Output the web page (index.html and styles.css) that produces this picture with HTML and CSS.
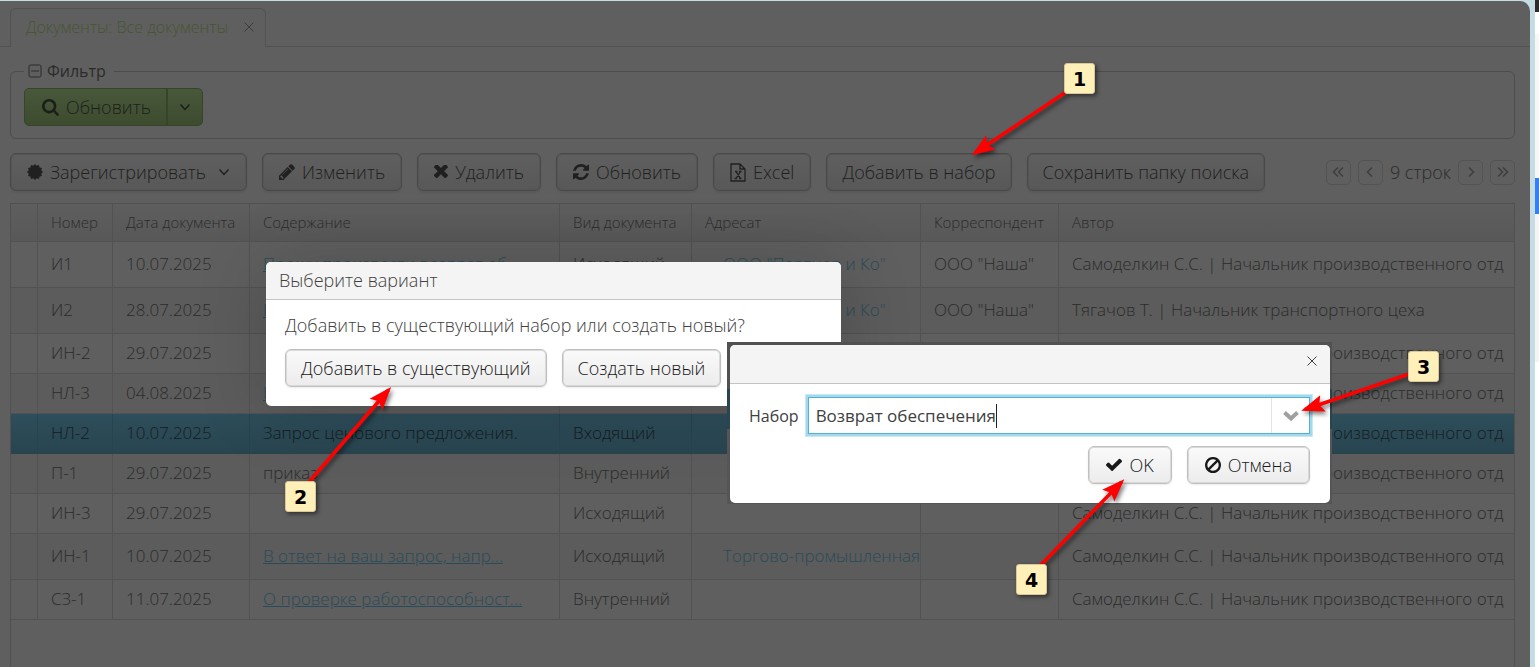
FILE: index.html
```html
<!DOCTYPE html>
<html lang="ru">
<head>
<meta charset="utf-8">
<title>Документы: Все документы</title>
<link rel="stylesheet" href="styles.css">
</head>
<body>
<svg class="defs" width="0" height="0" aria-hidden="true">
  <symbol id="i-chev" viewBox="0 0 12 12"><path d="M1.500 3.500 6 8.500l4.500-5" fill="none" stroke="currentColor" stroke-width="1.500"/></symbol>
  <symbol id="i-close" viewBox="0 0 12 12"><path d="M1.500 1.500l9 9m0-9l-9 9" fill="none" stroke="currentColor"/></symbol>
  <symbol id="i-refresh" viewBox="128 128 1536 1536"><path fill="currentColor" d="M1639 1056q0 5-1 7-64 268-268 434.500t-478 166.500q-146 0-282.500-55t-243.500-157l-129 129q-19 19-45 19t-45-19-19-45v-448q0-26 19-45t45-19h448q26 0 45 19t19 45-19 45l-137 137q71 66 161 102t187 36q134 0 250-65t186-179q11-17 53-117 8-23 30-23h192q13 0 22.500 9.500t9.500 22.500zm25-800v448q0 26-19 45t-45 19h-448q-26 0-45-19t-19-45 19-45l138-138q-148-137-349-137-134 0-250 65t-186 179q-11 17-53 117-8 23-30 23h-199q-13 0-22.500-9.500t-9.500-22.500v-7q65-268 270-434.500t480-166.500q146 0 284 55.500t245 156.500l130-129q19-19 45-19t45 19 19 45z"/></symbol>
</svg>
<div class="shell">
  <main class="window">
    <nav class="tabs">
      <div class="tab"><a href="#docs">Документы: Все документы</a><button class="tab-close" aria-label="Закрыть вкладку"><svg class="s12"><use href="#i-close"/></svg></button></div>
    </nav>
    <div class="content" id="docs">
      <fieldset class="filter">
        <legend><svg class="s14" viewBox="0 0 14 14"><rect x="1" y="1" width="12" height="12" rx="1.500" fill="none" stroke="currentColor"/><path d="M3 7h8" stroke="currentColor"/></svg>Фильтр</legend>
        <div class="split">
          <button class="split-main"><svg class="s17" viewBox="64 128 1664 1664"><path fill="currentColor" d="M1216 832q0-185-131.500-316.500t-316.500-131.500-316.500 131.500-131.500 316.500 131.500 316.500 316.500 131.500 316.500-131.500 131.500-316.500zm512 832q0 52-38 90t-90 38q-54 0-90-38l-343-342q-179 124-399 124-143 0-273.500-55.500t-225-150-150-225-55.500-273.500 55.500-273.500 150-225 225-150 273.500-55.500 273.500 55.500 225 150 150 225 55.500 273.500q0 220-124 399l343 343q37 37 37 90z"/></svg>Обновить</button>
          <button class="split-more" aria-label="Ещё"><svg class="s12"><use href="#i-chev"/></svg></button>
        </div>
      </fieldset>
      <div class="toolbar">
        <button class="btn dim icon"><svg class="s16" viewBox="-8 -8 16 16"><path fill="currentColor" d="M0-8 1.700-6.200 4-6.930 4.560-4.560 6.930-4 6.200-1.700 8 0 6.200 1.700 6.930 4 4.560 4.560 4 6.930 1.700 6.200 0 8-1.700 6.200-4 6.930-4.560 4.560-6.930 4-6.200 1.700-8 0-6.200-1.700-6.930-4-4.560-4.560-4-6.930-1.700-6.200z"/></svg>Зарегистрировать<svg class="s12 menu"><use href="#i-chev"/></svg></button>
        <button class="btn dim icon"><svg class="s16" viewBox="128 128 1536 1536"><path fill="currentColor" d="M491 1536l91-91-235-235-91 91v107h128v128h107zm523-928q0-22-22-22-10 0-17 7l-542 542q-7 7-7 17 0 22 22 22 10 0 17-7l542-542q7-7 7-17zm-54-192l416 416-832 832h-416v-416zm683 96q0 53-37 90l-166 166-416-416 166-165q36-38 90-38 53 0 91 38l235 234q37 39 37 91z"/></svg>Изменить</button>
        <button class="btn dim icon"><svg class="s14" viewBox="300 430 1200 1200"><path fill="currentColor" d="M1490 1322q0 40-28 68l-136 136q-28 28-68 28t-68-28l-294-294-294 294q-28 28-68 28t-68-28l-136-136q-28-28-28-68t28-68l294-294-294-294q-28-28-28-68t28-68l136-136q28-28 68-28t68 28l294 294 294-294q28-28 68-28t68 28l136 136q28 28 28 68t-28 68l-294 294 294 294q28 28 28 68z"/></svg>Удалить</button>
        <button class="btn dim icon"><svg class="s16"><use href="#i-refresh"/></svg>Обновить</button>
        <button class="btn dim icon"><svg class="excel" viewBox="0 0 16 19"><path d="M1 1h9l5 5v12H1zM10 1v5h5M5 8.500h2.500M9 8.500h2.500M4.500 15.500H7M9 15.500h2.500M6 8.500l4.500 7M10.500 8.500 6 15.500" fill="none" stroke="currentColor" stroke-width="1.300"/></svg>Excel</button>
        <button class="btn dim">Добавить в набор</button>
        <button class="btn dim">Сохранить папку поиска</button>
        <div class="pager">
          <button aria-label="Первая страница"><svg class="s12" viewBox="0 0 12 12"><path d="M6 1.500 1.500 6 6 10.500M11 1.500 6.500 6l4.500 4.500"/></svg></button>
          <button aria-label="Предыдущая"><svg class="s12" viewBox="0 0 12 12"><path d="M8 1.500 3.500 6 8 10.500"/></svg></button>
          <span>9 строк</span>
          <button aria-label="Следующая"><svg class="s12" viewBox="0 0 12 12"><path d="M4 1.500 8.500 6 4 10.500"/></svg></button>
          <button aria-label="Последняя страница"><svg class="s12" viewBox="0 0 12 12"><path d="M1 1.500 5.500 6 1 10.500M6 1.500 10.500 6 6 10.500"/></svg></button>
        </div>
      </div>
      <div class="grid">
        <table>
          <colgroup><col class="c-mark"><col class="c-num"><col class="c-date"><col class="c-text"><col class="c-kind"><col class="c-to"><col class="c-corr"><col></colgroup>
          <thead><tr><th></th><th>Номер</th><th>Дата документа</th><th>Содержание</th><th>Вид документа</th><th>Адресат</th><th>Корреспондент</th><th>Автор</th></tr></thead>
          <tbody>
            <tr class="tall"><td></td><td>И1</td><td>10.07.2025</td><td><a href="#i1">Прошу произвести возврат об...</a></td><td>Исходящий</td><td><a class="org" href="#o1">ООО "Партнер и Ко"</a></td><td>ООО "Наша"</td><td>Самоделкин С.С. | Начальник производственного отд</td></tr>
            <tr class="tall"><td></td><td>И2</td><td>28.07.2025</td><td><a href="#i2">Прошу произвести возврат об...</a></td><td>Исходящий</td><td><a class="org" href="#o1">ООО "Партнер и Ко"</a></td><td>ООО "Наша"</td><td>Тягачов Т. | Начальник транспортного цеха</td></tr>
            <tr><td></td><td>ИН-2</td><td>29.07.2025</td><td></td><td>Исходящий</td><td></td><td></td><td>Самоделкин С.С. | Начальник производственного отд</td></tr>
            <tr><td></td><td>НЛ-3</td><td>04.08.2025</td><td><a href="#n3">Прошу</a></td><td></td><td></td><td></td><td>Самоделкин С.С. | Начальник производственного отд</td></tr>
            <tr class="sel"><td></td><td>НЛ-2</td><td>10.07.2025</td><td>Запрос ценового предложения.</td><td>Входящий</td><td></td><td></td><td>Самоделкин С.С. | Начальник производственного отд</td></tr>
            <tr><td></td><td>П-1</td><td>29.07.2025</td><td>приказ</td><td>Внутренний</td><td></td><td></td><td>Самоделкин С.С. | Начальник производственного отд</td></tr>
            <tr><td></td><td>ИН-3</td><td>29.07.2025</td><td></td><td>Исходящий</td><td></td><td></td><td>Самоделкин С.С. | Начальник производственного отд</td></tr>
            <tr class="tall"><td></td><td>ИН-1</td><td>10.07.2025</td><td><a href="#in1">В ответ на ваш запрос, напр...</a></td><td>Исходящий</td><td><a class="org" href="#o2">Торгово-промышленная</a></td><td></td><td>Самоделкин С.С. | Начальник производственного отд</td></tr>
            <tr><td></td><td>СЗ-1</td><td>11.07.2025</td><td><a href="#sz1">О проверке работоспособност...</a></td><td>Внутренний</td><td></td><td></td><td>Самоделкин С.С. | Начальник производственного отд</td></tr>
          </tbody>
        </table>
      </div>
    </div>
  </main>
  <div class="rail"></div>
</div>

<section class="dialog choice" role="dialog" aria-labelledby="choice-title">
  <header id="choice-title">Выберите вариант</header>
  <div class="choice-body">
    <p>Добавить в существующий набор или создать новый?</p>
    <div class="row"><button class="btn">Добавить в существующий</button><button class="btn">Создать новый</button></div>
  </div>
</section>

<div class="backdrop">
  <section class="dialog pick" role="dialog" aria-label="Выбор набора">
    <header><button class="close" aria-label="Закрыть"><svg class="s12"><use href="#i-close"/></svg></button></header>
    <div class="pick-body">
      <div class="field">
        <label for="set">Набор</label>
        <div class="combo"><input id="set" type="text" value="Возврат обеспечения"><span class="caret"></span><button aria-label="Открыть список"><svg class="drop" viewBox="0 0 18 12"><path d="M2.500 2.500 9 8.500l6.500-6" fill="none" stroke="currentColor" stroke-width="4"/></svg></button></div>
      </div>
      <div class="row end">
        <button class="btn icon"><svg class="s16" viewBox="121 160 1550 1550"><path fill="currentColor" d="M1671 566q0 40-28 68l-724 724-136 136q-28 28-68 28t-68-28l-136-136-362-362q-28-28-28-68t28-68l136-136q28-28 68-28t68 28l294 295 656-657q28-28 68-28t68 28l136 136q28 28 28 68z"/></svg>OK</button>
        <button class="btn icon"><svg class="s16" viewBox="128 125 1536 1536"><path fill="currentColor" d="M1440 893q0-161-87-295l-754 753q137 89 297 89 111 0 211.500-43.500t173.500-116.500 116-174.500 43-212.500zm-999 299l755-754q-135-91-300-91-148 0-273 73t-198 199-73 274q0 162 89 299zm1223-299q0 157-61 300t-163.500 246-245 164-298.500 61-298.500-61-245-164-163.500-246-61-300 61-299.500 163.500-245.500 245-164 298.500-61 298.500 61 245 164 163.500 245.500 61 299.500z"/></svg>Отмена</button>
      </div>
    </div>
  </section>
</div>

<svg class="arrows" width="1539" height="667" viewBox="0 0 1539 667" aria-hidden="true">
  <defs><marker id="head" markerUnits="userSpaceOnUse" markerWidth="24" markerHeight="18" refX="19" refY="9" orient="auto" overflow="visible"><path d="M23 9 0 .5 4 9 0 17.500z" fill="#f00"/></marker></defs>
  <path marker-end="url(#head)" d="M1066 92 975 153"/>
  <path marker-end="url(#head)" d="M309 482 388.500 390"/>
  <path marker-end="url(#head)" d="M1409 374 1305 409.500"/>
  <path marker-end="url(#head)" d="M1035 571 1121.500 482"/>
</svg>
<span class="pin p1">1</span><span class="pin p2">2</span><span class="pin p3">3</span><span class="pin p4">4</span>
</body>
</html>
```
FILE: styles.css
```css
* { box-sizing: border-box; }
body {
  margin: 0;
  height: 100vh;
  overflow: hidden;
  background: #c5dde2;
  color: #2b2b2b;
  font: 300 18px/24px "Open Sans", "Noto Sans", sans-serif;
}
button, input { font: inherit; color: inherit; margin: 0; padding: 0; border: 0; background: none; }
svg { flex: none; display: block; }
.defs { position: absolute; }
.s12 { width: 12px; height: 12px; }
.s14 { width: 14px; height: 14px; }
.s16 { width: 16px; height: 16px; }
.s17 { width: 17px; height: 17px; }
.excel { width: 16px; height: 19px; }

.shell { display: flex; height: 100%; padding-top: 1px; }
.window {
  flex: 1;
  min-width: 0;
  display: flex;
  flex-direction: column;
  margin-right: 5px;
  background: #5f5f5f;
  border-radius: 0 10px 0 0;
}
.rail {
  width: 4px;
  margin-top: -1px;
  background: linear-gradient(#2b2b2b 12px, #fff 12px 34px, #f7f7f7 34px 178px, #2f7fff 178px 214px, #f4f4f4 214px 362px, #fff 362px);
}

.tabs { height: 46px; padding: 7px 10px 0; border-bottom: 1px solid #525252; }
.tab {
  display: inline-flex;
  align-items: center;
  gap: 15px;
  height: 39px;
  padding: 0 10px 2px 15px;
  border: 1px solid #525252;
  border-bottom: 0;
  border-radius: 6px 6px 0 0;
  background: #5f5f5f;
  font-size: 16px;
}
.tab a { color: #455631; text-decoration: none; }
.tab-close { color: #3c3c3c; }

.content { flex: 1; display: flex; flex-direction: column; min-height: 0; padding: 12px 15px 0 10px; }
.filter {
  margin: 0;
  padding: 5px 13px 12px;
  border: 1px solid #4c4c4c;
  border-radius: 6px;
}
.filter legend {
  display: flex;
  align-items: center;
  gap: 5px;
  padding: 0 8px 0 4px;
  font-size: 16px;
  font-weight: 400;
}
.split {
  display: inline-flex;
  height: 38px;
  border: 1px solid #36442a;
  border-radius: 5px;
  background: linear-gradient(#48583a, #3d4b2f);
  color: #1c1f19;
}
.split button { display: flex; align-items: center; }
.split-main { gap: 7px; padding: 0 15px 0 17px; }
.split-more { padding: 0 11px; border-left: 2px solid #36442a; }

.toolbar { display: flex; align-items: center; gap: 15px; margin: 14px 0 12px; }
.btn {
  display: flex;
  align-items: center;
  gap: 7px;
  height: 38px;
  padding: 0 15px;
  white-space: nowrap;
  color: #191919;
  border: 1px solid #c0c0c0;
  border-radius: 6px;
  background: linear-gradient(#fafafa, #ececec);
  box-shadow: inset 0 0 0 1px #d9d9d9, 0 1px 2px rgba(0, 0, 0, .08);
}
.icon { padding: 0 17px; }
.dim {
  color: #202020;
  border-color: #494949;
  background: linear-gradient(#5f5f5f, #585858);
  box-shadow: inset 0 0 0 1px #555, 0 2px 2px rgba(0, 0, 0, .06);
}
.dim.icon { padding: 0 16px; }
.menu { margin-left: 5px; }
.pager { display: flex; align-items: center; gap: 7px; margin-left: auto; }
.pager button {
  display: flex;
  align-items: center;
  justify-content: center;
  width: 25px;
  height: 25px;
  border: 1px solid #535353;
  border-radius: 5px;
  color: #3e3e3e;
}
.pager path { fill: none; stroke: currentColor; stroke-width: 1.5; }

.grid { flex: 1; overflow: hidden; border: 1px solid #505050; border-bottom: 0; }
table { width: 100%; border-collapse: separate; border-spacing: 0; table-layout: fixed; font-size: 17px; }
.c-mark { width: 27px; }
.c-num { width: 75px; }
.c-date { width: 137px; }
.c-text { width: 310px; }
.c-kind { width: 132px; }
.c-to { width: 229px; }
.c-corr { width: 138px; }
th, td {
  height: 40px;
  padding: 0 0 2px 13px;
  overflow: hidden;
  white-space: nowrap;
  text-align: left;
  font-weight: 300;
  border-right: 1px solid #525252;
  border-bottom: 1px solid #525252;
}
th:last-child, td:last-child { border-right: 0; }
th { height: 38px; font-size: 15px; background: linear-gradient(#5e5e5e, #585858); }
.tall td { height: 46px; }
tbody tr:nth-child(even) td { background: #5c5c5c; }
tbody .sel td { background: linear-gradient(#2e4e5b, #284550); border-color: #29434d; color: #161b1d; }
td a { color: #294b59; }
td .org { margin-left: 18px; text-decoration: none; }

.dialog { overflow: hidden; border-radius: 5px; background: #fff; color: #404040; }
.dialog header { height: 38px; background: #f4f4f4; border-bottom: 1px solid #c4c4c4; }
.row { display: flex; gap: 15px; }
.end { justify-content: flex-end; }
.choice {
  position: absolute;
  left: 266px;
  top: 262px;
  width: 575px;
  box-shadow: 0 4px 70px rgba(0, 0, 0, .18);
}
.choice header { padding: 6px 13px; }
.choice-body { padding: 13px 19px 19px; }
.choice p { margin: 0 0 12px; }

.backdrop {
  position: absolute;
  left: 727px;
  top: 342px;
  width: 605px;
  padding: 3px 2px 1px 3px;
  background: linear-gradient(#515151 47px, #284550 47px 87px, #555 87px);
}
.pick header { display: flex; justify-content: flex-end; align-items: flex-start; height: 39px; padding: 10px 12px; }
.pick-body { padding: 13px 20px 19px 19px; }
.field { display: flex; align-items: center; gap: 9px; margin-bottom: 12px; font-weight: 400; }
.field label { font-size: 16px; }
.combo {
  flex: 1;
  display: flex;
  align-items: center;
  height: 37px;
  padding-left: 7px;
  border: 1px solid #4fb3d9;
  box-shadow: 0 0 0 2px #a6d8eb, 0 0 0 3px #c9e8f3;
}
.combo input { field-sizing: content; outline: 0; font-size: 17px; }
.caret { width: 1px; height: 24px; background: #222; }
.combo button { display: flex; align-items: center; justify-content: center; align-self: stretch; width: 38px; margin-left: auto; border-left: 1px solid #e4e4e4; color: #a0a0a0; }
.drop { width: 18px; height: 12px; }

.arrows { position: absolute; left: 0; top: 0; pointer-events: none; filter: drop-shadow(2px 3px 2px rgba(0, 0, 0, .5)); }
.arrows > path { fill: none; stroke: #f00; stroke-width: 3.5; }
.pin {
  position: absolute;
  width: 31px;
  height: 31px;
  border: 1px solid #d8c898;
  border-radius: 3px;
  background: #ffefb8;
  color: #000;
  font: 700 19px/31px "DejaVu Sans", sans-serif;
  text-align: center;
  box-shadow: 2px 2px 4px rgba(0, 0, 0, .5);
}
.p1 { left: 1064px; top: 63px; }
.p2 { left: 285px; top: 481px; }
.p3 { left: 1408px; top: 351px; }
.p4 { left: 1016px; top: 564px; }
```
